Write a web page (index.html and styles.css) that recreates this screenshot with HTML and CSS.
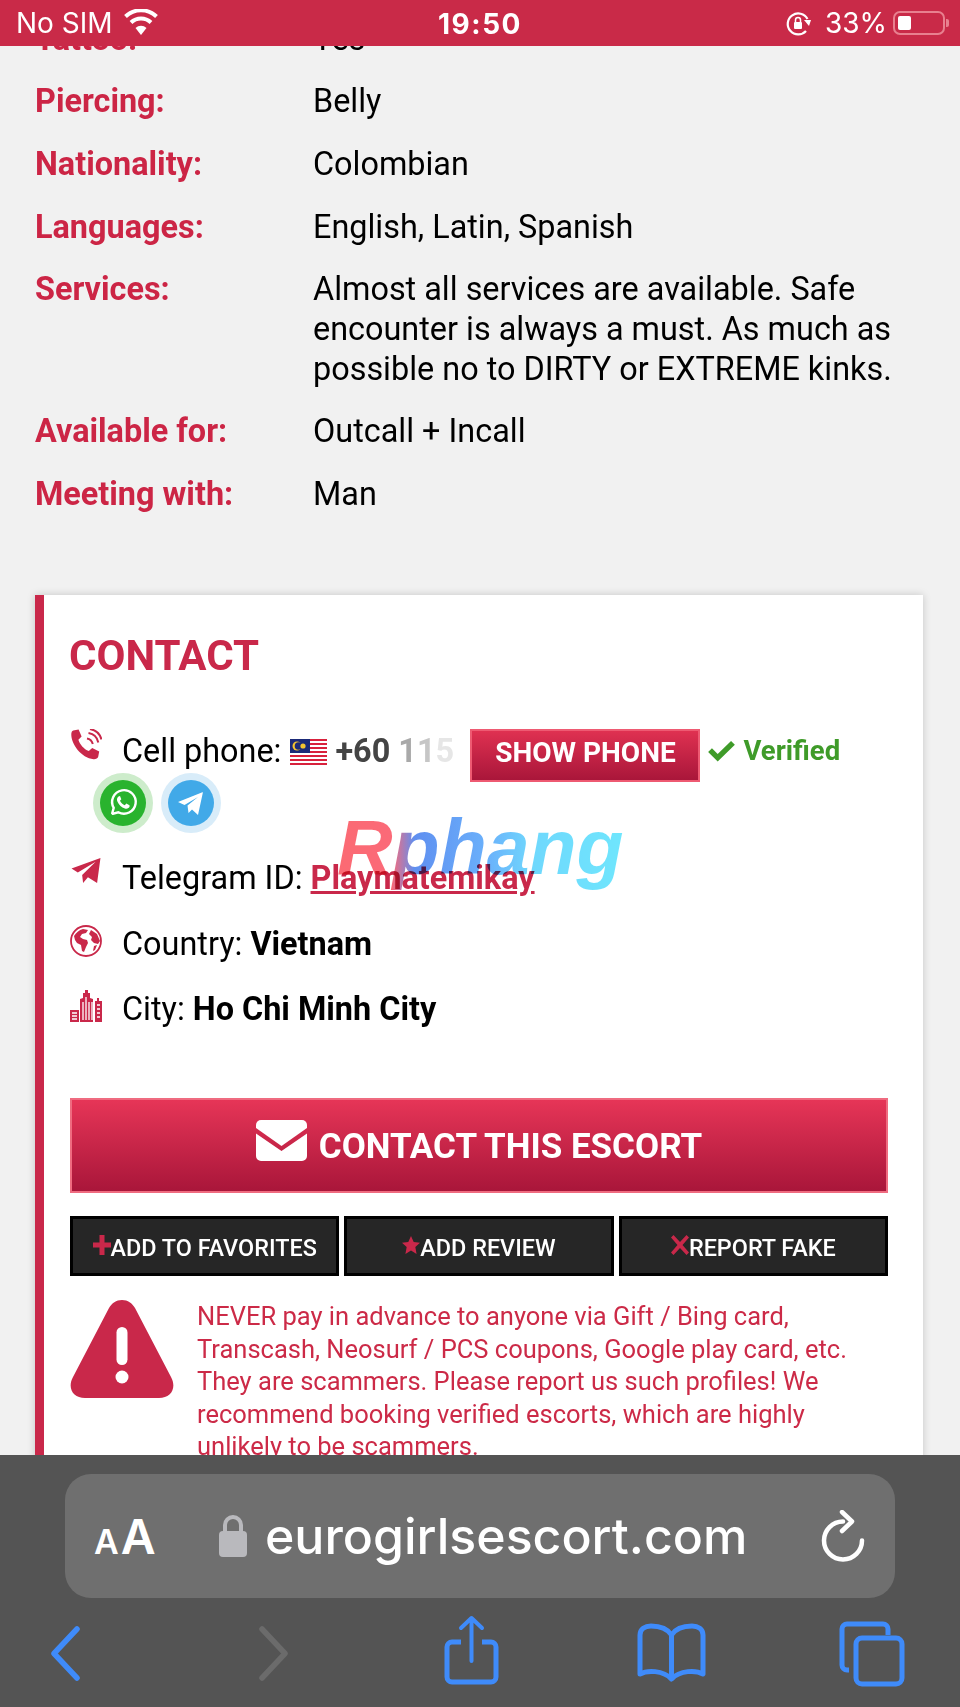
FILE: index.html
```html
<!DOCTYPE html>
<html lang="en">
<head>
<meta charset="utf-8">
<title>Contact</title>
<link rel="stylesheet" href="styles.css">
</head>
<body>
<div class="screen">
  <main class="page">
    <dl class="facts">
      <div class="fact"><dt>Tattoo:</dt><dd>Yes</dd></div>
      <div class="fact"><dt>Piercing:</dt><dd>Belly</dd></div>
      <div class="fact"><dt>Nationality:</dt><dd>Colombian</dd></div>
      <div class="fact"><dt>Languages:</dt><dd>English, Latin, Spanish</dd></div>
      <div class="fact"><dt>Services:</dt><dd>Almost all services are available. Safe encounter is always a must. As much as possible no to DIRTY or EXTREME kinks.</dd></div>
      <div class="fact"><dt>Available for:</dt><dd>Outcall + Incall</dd></div>
      <div class="fact"><dt>Meeting with:</dt><dd>Man</dd></div>
    </dl>

    <section class="card">
      <h2 class="card-title">CONTACT</h2>

      <div class="phone-row">
        <svg class="row-icon" viewBox="0 0 32 32"><path class="red-fill" d="M3.2 1.500 8.600.6l3 7-3.200 3.200c1.400 4.600 5.400 9.400 10.400 11.300l3.400-3 7 3.400-1 5.300c-.3 1.400-2.600 2.600-4.600 2.400C11.200 29 1 15 1.300 5c0-1.400.7-3.200 1.900-3.500Z"/><path class="red-line" d="M17 9.500c3 .6 5 2.500 5.800 5.600M18.500 4c5 .8 8.800 4.500 9.800 9.500M20 0c5.500 1 10 5 11.500 10.500"/></svg>
        <div class="phone-line">
          <span class="row-text">Cell phone:</span>
          <svg class="flag" viewBox="0 0 37 26">
            <rect width="37" height="26" fill="#fff"/>
            <path d="M0 0h37v2H0zM0 4h37v2H0zM0 8h37v2H0zM0 12h37v2H0zM0 16h37v2H0zM0 20h37v2H0zM0 24h37v2H0z" fill="#d8213c"/>
            <rect width="20" height="14" fill="#1b2a78"/>
            <circle cx="7" cy="7" r="4.500" fill="#f4c430"/><circle cx="8.500" cy="7" r="3.800" fill="#1b2a78"/><circle cx="13" cy="7" r="2.600" fill="#f4c430"/>
          </svg>
          <span class="phone-num">+60 <span class="fade-a">1</span><span class="fade-b">1</span><span class="fade-c">5</span></span>
          <button class="show-btn">SHOW PHONE</button>
          <svg class="check" viewBox="0 0 28 22"><path d="M10 21.500 0 11.500l4-4 6 6L24 0l4 4Z"/></svg>
          <span class="verified">Verified</span>
        </div>
      </div>

      <div class="social">
        <span class="bubble bubble-green">
          <svg viewBox="0 0 32 32"><path d="M5 27l1.700-6.200A11.800 11.800 0 1 1 11.300 25.300Z" fill="none" stroke="#fff" stroke-width="2.400"/><path d="M11.500 9.500c-1.500 1-2 3-1 5.300 1.500 3.400 4 5.700 7.400 6.800 2.300.6 4-.3 4.700-2l-.1-1.400-3.200-1.600-1.500 1.700c-2-.8-3.800-2.500-4.800-4.600l1.300-1.500-1.300-3.100Z" fill="#fff"/></svg>
        </span>
        <span class="bubble bubble-blue">
          <svg viewBox="0 0 32 32"><path d="M3 15 28 5l-5 23-6-5.500-3.500 3.500-1-7.500L23 10 9.500 18Z" fill="#fff"/></svg>
        </span>
      </div>

      <div class="info-row row-telegram">
        <svg class="row-icon" viewBox="0 0 32 28"><path class="red-fill" d="M1 11 31 0l-3.500 26-9.500-6-5 6-1-8.500L26 4 7.500 15Z"/></svg>
        <span class="row-text">Telegram ID: <a class="link" href="#">Playmatemikay</a></span>
      </div>

      <div class="info-row row-country">
        <svg class="row-icon" viewBox="0 0 32 32"><circle cx="16" cy="16" r="15" fill="none" stroke="#c9284a" stroke-width="1.800"/><path class="red-fill" d="M4 11c2-3 5-6 9-7l5 1-2 3-4 1-2 3 3 2 4 1 1 3-2 4-2 5-2-1-1-6-4-2-2-3Zm17-6 6 4 3 7-2 3-4-1-3-3 1-3-3-3Z"/><path class="red-fill" d="m24 21 3-1-2 5-2 1Z"/></svg>
        <span class="row-text">Country: <b>Vietnam</b></span>
      </div>

      <div class="info-row row-city">
        <svg class="row-icon" viewBox="0 0 32 32"><path class="red-fill" d="M0 20h9v12H0Zm10-11 3-1V3h2V0h3v3h2v5l3 1v23H10Zm15 2h2V8h2v3h3v21h-7Z"/><path d="M2 23h5M2 26h5M2 29h5M13 12v18M16 7v23M19 12v18M22 12v18M27 15h3M27 19h3M27 23h3M27 27h3" stroke="#fff" stroke-width="1.300"/></svg>
        <span class="row-text">City: <b>Ho Chi Minh City</b></span>
      </div>

      <button class="contact-btn">
        <svg class="mail" viewBox="0 0 51 41"><path d="M5 0h41a5 5 0 0 1 5 5v3L25.500 26 0 8V5a5 5 0 0 1 5-5Z"/><path d="M0 13.500 25.500 31 51 13.500V36a5 5 0 0 1-5 5H5a5 5 0 0 1-5-5Z"/></svg>
        <span>CONTACT THIS ESCORT</span>
      </button>

      <div class="actions">
        <button class="action"><svg viewBox="0 0 18 20"><path d="M6.500 0h5v7.500H18v5h-6.500V20h-5v-7.500H0v-5h6.500Z"/></svg>ADD TO FAVORITES</button>
        <button class="action"><svg viewBox="0 0 20 20"><path d="m10 0 3 6.700 7 .8-5.200 4.800L16.200 20 10 16l-6.200 4 1.400-7.700L0 7.500l7-.8Z"/></svg>ADD REVIEW</button>
        <button class="action"><svg viewBox="0 0 18 20"><path d="M0 2.500 2.500 0 9 7 15.500 0 18 2.500 11.500 10l6.500 7.500-2.500 2.500L9 13l-6.500 7L0 17.500 6.500 10Z"/></svg>REPORT FAKE</button>
      </div>

      <div class="warning">
        <svg class="warn-icon" viewBox="0 0 104 98"><path d="M52 0c6 0 10 3 13 8l36 69c6 11 0 21-12 21H15C3 98-3 88 3 77L39 8c3-5 7-8 13-8Z" fill="#c9284a"/><rect x="46.500" y="27" width="11" height="38" rx="5.500" fill="#fff"/><circle cx="52" cy="77" r="6.500" fill="#fff"/></svg>
        <p class="warn-text">NEVER pay in advance to anyone via Gift / Bing card, Transcash, Neosurf / PCS coupons, Google play card, etc. They are scammers. Please report us such profiles! We recommend booking verified escorts, which are highly unlikely to be scammers.</p>
      </div>
    </section>
  </main>

  <div class="watermark">Rphang</div>

  <header class="status">
    <div class="status-left">
      <span>No SIM</span>
      <svg class="wifi" viewBox="0 0 36 26"><path d="M18 26l-5.500-7a8 8 0 0 1 11 0Z" fill="#fff"/><path d="M8 13.500a14.500 14.500 0 0 1 20 0M2.500 7.500a22.500 22.500 0 0 1 31 0" fill="none" stroke="#fff" stroke-width="4"/></svg>
    </div>
    <div class="status-time">19:50</div>
    <div class="status-right">
      <svg class="rotate" viewBox="0 0 25 25"><path d="M20 20a10.500 10.500 0 1 1 1.500-12" fill="none" stroke="#fff" stroke-width="2.200"/><path d="m18 9 7 0-2 6Z" fill="#fff"/><rect x="8" y="11" width="8" height="7" rx="1" fill="#fff"/><path d="M9.500 11V9a2.500 2.500 0 0 1 5 0v2" fill="none" stroke="#fff" stroke-width="1.500"/></svg>
      <span>33%</span>
      <span class="battery"><span class="battery-fill"></span></span>
    </div>
  </header>

  <footer class="safari">
    <div class="url-bar">
      <span class="aa"><small>A</small>A</span>
      <span class="url">
        <svg class="lock" viewBox="0 0 28 42"><rect y="16" width="28" height="26" rx="4" fill="#b9b9bd"/><path d="M6 18V10a8 8 0 0 1 16 0v8" fill="none" stroke="#b9b9bd" stroke-width="4"/></svg>
        <span>eurogirlsescort.com</span>
      </span>
      <svg class="reload" viewBox="0 0 44 52"><path d="M22 11.500A19 19 0 1 0 41 30.500" fill="none" stroke="#fff" stroke-width="4.500" stroke-linecap="round"/><path d="m21 2 10 9.500L21 21" fill="none" stroke="#fff" stroke-width="4.500" stroke-linecap="round" stroke-linejoin="round"/></svg>
    </div>
    <nav class="toolbar">
      <svg class="tool tool-chev" viewBox="0 0 30 55"><path d="M27 3 4 27.500 27 52" fill="none" stroke="#3f8bfa" stroke-width="5.500" stroke-linecap="round" stroke-linejoin="round"/></svg>
      <svg class="tool tool-chev" viewBox="0 0 30 55"><path d="m3 3 23 24.500L3 52" fill="none" stroke="#6b6b6b" stroke-width="5.500" stroke-linecap="round" stroke-linejoin="round"/></svg>
      <svg class="tool tool-share" viewBox="0 0 55 70"><path d="M17 27H8a5 5 0 0 0-5 5v30a5 5 0 0 0 5 5h39a5 5 0 0 0 5-5V32a5 5 0 0 0-5-5h-9" fill="none" stroke="#3f8bfa" stroke-width="5"/><path d="M27.500 46V3M17 13 27.500 3 38 13" fill="none" stroke="#3f8bfa" stroke-width="4" stroke-linecap="round" stroke-linejoin="round"/></svg>
      <svg class="tool tool-book" viewBox="0 0 69 59"><path d="M34.500 56V12C30 5 22 3 14 3 8 3 3 6 3 12v39c7-4 23-4 31.500 5 8.500-9 24.500-9 31.500-5V12c0-6-5-9-11-9-8 0-16 2-20.500 9" fill="none" stroke="#3f8bfa" stroke-width="5" stroke-linejoin="round"/></svg>
      <svg class="tool tool-tabs" viewBox="0 0 66 66"><path d="M10 49H8a5 5 0 0 1-5-5V8a5 5 0 0 1 5-5h36a5 5 0 0 1 5 5v6" fill="none" stroke="#3f8bfa" stroke-width="5"/><rect x="17" y="17" width="46" height="46" rx="6" fill="none" stroke="#3f8bfa" stroke-width="5"/></svg>
    </nav>
  </footer>
</div>
</body>
</html>
```

FILE: styles.css
```css
* { box-sizing: border-box; }
html, body { margin: 0; padding: 0; }
body { font-family: Roboto, "Liberation Sans", sans-serif; background: #f1f1f1; color: #000; }
.screen { position: relative; width: 960px; height: 1707px; overflow: hidden; background: #f1f1f1; }

.page { padding: 19.500px 37px 0 35px; }

.facts { margin: 0; display: flex; flex-direction: column; gap: 23px; }
.fact { display: grid; grid-template-columns: 278px 1fr; font-size: 32.400px; line-height: 39.700px; }
.fact dt { color: #cc2545; font-weight: 700; }
.fact dd { margin: 0; }

.card { margin-top: 80.500px; background: #fff; border-left: 9px solid #c9284a; padding: 36px 36px 0 26px; box-shadow: 0 0 8px rgba(0,0,0,.18); }
.card-title { margin: 0 0 0 -1px; font-size: 42px; line-height: 50px; font-weight: 700; color: #c9284a; }

.phone-row { display: flex; margin-top: 48px; }
.row-icon { width: 32px; height: 32px; flex: none; margin-right: 20px; }
.red-fill { fill: #c9284a; }
.red-line { fill: none; stroke: #c9284a; stroke-width: 2; }
.row-text { font-size: 32.400px; line-height: 42px; white-space: nowrap; }
.row-text b { font-weight: 700; }
.phone-line { display: flex; align-items: flex-start; }
.phone-line .row-text { margin-top: 1px; }
.flag { width: 37px; height: 26px; flex: none; margin: 10px 0 0 9px; }
.phone-num { font-size: 32.400px; line-height: 42px; font-weight: 700; color: #444; margin: 1px 0 0 8px; width: 135px; white-space: pre; }
.fade-a { color: #a9a9a9; }
.fade-b { color: #c6c6c6; }
.fade-c { color: #e6e6e6; }
.show-btn { width: 230px; height: 53px; padding: 0 0 6px; border: 2px solid #ee5a72; background: linear-gradient(#df3151, #a9163a); color: #fff; font: 700 28px Roboto, sans-serif; }
.check { width: 27px; height: 21px; flex: none; margin: 12px 0 0 8px; fill: #3f9b29; }
.verified { font-size: 27.500px; line-height: 42px; font-weight: 700; color: #3f9b29; margin: 1px 0 0 8px; }

.social { display: flex; gap: 8px; margin: -9px 0 0 23px; }
.bubble { width: 60px; height: 60px; border-radius: 50%; display: flex; align-items: center; justify-content: center; }
.bubble svg { width: 46px; height: 46px; padding: 7px; border-radius: 50%; }
.bubble-green { background: #cdeccb; }
.bubble-green svg { background: #29b32e; }
.bubble-blue { background: #d8ecf9; }
.bubble-blue svg { background: #41a9e8; }

.info-row { display: flex; height: 40px; align-items: center; }
.row-telegram { margin-top: 25px; }
.row-country { margin-top: 26px; }
.row-city { margin-top: 25px; }
.row-telegram .row-icon { height: 27px; margin-top: -14px; }
.row-country .row-icon { margin-top: -6px; }
.row-city .row-icon { margin-top: -6px; }
.link { color: #c9284a; font-weight: 700; }

.contact-btn { display: flex; align-items: center; justify-content: center; gap: 12px; width: 818px; height: 95px; margin-top: 69px; padding: 2px 0 0; border: 2px solid #ef6b80; background: linear-gradient(#e63557, #a9163a); color: #fff; font: 700 35px Roboto, sans-serif; }
.mail { width: 51px; height: 41px; fill: #fff; margin-top: -12px; }

.actions { display: grid; grid-template-columns: repeat(3, 1fr); gap: 5px; width: 818px; margin-top: 23px; }
.action { display: flex; align-items: center; justify-content: center; height: 60px; padding: 3px 0 0; border: 3px solid #000; background: #262626; color: #fff; font: 500 23.400px Roboto, sans-serif; white-space: nowrap; }
.action svg { width: 18px; height: 20px; fill: #c9284a; margin-top: -5px; }

.warning { display: flex; gap: 23px; width: 818px; margin-top: 24px; }
.warn-icon { width: 104px; height: 98px; flex: none; }
.warn-text { margin: 0; font-size: 25.500px; line-height: 32.500px; color: #cc2a47; }

.watermark { position: absolute; left: 337px; top: 799px; font: italic 700 77px "Liberation Sans", sans-serif; background: linear-gradient(90deg, #fb6a73 0%, #fb6a78 19%, #5f8ff0 27%, #6ab0fb 52%, #6fd8fd 68%, #6fe6fd 100%); -webkit-background-clip: text; background-clip: text; color: transparent; pointer-events: none; line-height: 96px; mix-blend-mode: multiply; }

.status { position: absolute; top: 0; left: 0; width: 960px; height: 46px; background: #c92a48; color: #fff; font-family: Inter, "Liberation Sans", sans-serif; font-size: 28px; line-height: 48px; }
.status-left { position: absolute; left: 16px; top: 0; height: 46px; display: flex; align-items: center; gap: 10px; }
.wifi { width: 36px; height: 26px; margin-top: -2px; }
.status-time { position: absolute; left: 0; right: 0; top: 0; text-align: center; font-weight: 700; letter-spacing: 1.500px; }
.status-right { position: absolute; right: 15px; top: 0; height: 46px; display: flex; align-items: center; gap: 12px; }
.rotate { width: 25px; height: 25px; margin-right: 2px; }
.battery { position: relative; width: 52px; height: 24px; border: 2px solid #e8808f; border-radius: 7px; padding: 3px; margin-left: -6px; }
.battery::after { content: ""; position: absolute; right: -6px; top: 6px; width: 3px; height: 8px; background: #e8808f; border-radius: 0 2px 2px 0; }
.battery-fill { display: block; width: 13px; height: 100%; background: #fff; border-radius: 2px; }

.safari { position: absolute; left: 0; top: 1455px; width: 960px; height: 252px; background: #545454; padding: 19px 0 0 65px; }
.url-bar { display: flex; align-items: center; width: 830px; height: 124px; border-radius: 26px; background: #6f6f6f; color: #fff; padding: 0 30px 0 29px; }
.aa { font: 600 48px Inter, "Liberation Sans", sans-serif; width: 60px; flex: none; }
.aa small { font-size: 34px; margin-right: 2px; }
.url { display: flex; align-items: center; gap: 18px; margin-left: 65px; font: 500 50px Inter, "Liberation Sans", sans-serif; flex: 1; }
.lock { width: 28px; height: 42px; }
.reload { width: 44px; height: 52px; flex: none; }

.toolbar { position: relative; height: 109px; }
.tool { position: absolute; }
.tool-chev { width: 30px; height: 55px; top: 28px; }
.tool-chev:nth-child(1) { left: -15px; }
.tool-chev:nth-child(2) { left: 194px; }
.tool-share { width: 55px; height: 70px; left: 379px; top: 17px; }
.tool-book { width: 69px; height: 59px; left: 572px; top: 25px; }
.tool-tabs { width: 66px; height: 66px; left: 774px; top: 23px; }
```
